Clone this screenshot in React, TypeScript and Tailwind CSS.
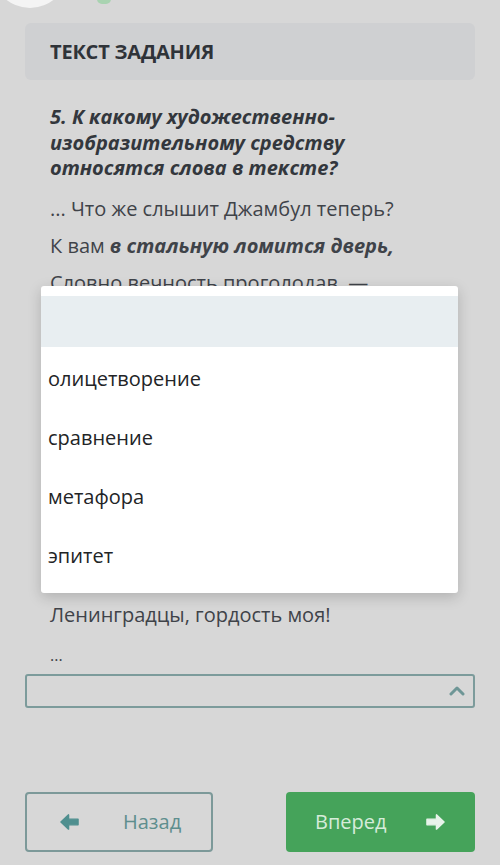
import React from "react";

const options = ["олицетворение", "сравнение", "метафора", "эпитет"];

const ArrowLeft = ({ className }: { className?: string }) => (
  <svg viewBox="0 0 20 18" className={className} fill="currentColor" stroke="currentColor" strokeWidth="1.5" strokeLinejoin="round">
    <path d="M1 9 L9 1.5 L9 6 L19 6 L19 12 L9 12 L9 16.5 Z" />
  </svg>
);

const ArrowRight = ({ className }: { className?: string }) => (
  <svg viewBox="0 0 20 18" className={className} fill="currentColor" stroke="currentColor" strokeWidth="1.5" strokeLinejoin="round">
    <path d="M19 9 L11 1.5 L11 6 L1 6 L1 12 L11 12 L11 16.5 Z" />
  </svg>
);

export default function App() {
  return (
    <div
      className="relative w-[500px] h-[865px] overflow-hidden bg-[#d7d7d7]"
      style={{ fontFamily: '"Open Sans", "Noto Sans", sans-serif' }}
    >
      {/* top of the page, scrolled away */}
      <div className="flex h-[8px] items-end overflow-hidden">
        <div className="ml-[-8px] h-[76px] w-[76px] shrink-0 rounded-full bg-[#f4f4f4]" />
        <div className="ml-[29px] mb-[4px] h-[10px] w-[14px] shrink-0 rounded-full bg-[#a9d3b1]" />
      </div>

      <div className="mx-[25px] mt-[15px] flex h-[57px] items-center rounded-[6px] bg-[#cfd0d2] px-[25px]">
        <h1 className="text-[20px] font-bold tracking-[-0.2px] text-[#2f3339]">ТЕКСТ ЗАДАНИЯ</h1>
      </div>

      <div className="px-[50px] pt-[24px]">
        <p className="text-[20px] font-bold italic leading-[25.5px] text-[#33373d]">
          5. К какому художественно-изобразительному средству относятся слова в тексте?
        </p>
        <div className="mt-[14px] text-[20px] leading-[27px] text-[#3f4349]">
          <p className="mb-[10px]">... Что же слышит Джамбул теперь?</p>
          <p className="mb-[10px]">
            К вам <b className="italic">в стальную ломится дверь,</b>
          </p>
          <p className="mb-[10px]">Словно вечность проголодав, —</p>
          {/* lines hidden under the open list */}
          <div className="h-[295px]" />
          <p className="mb-[14px]">Ленинградцы, гордость моя!</p>
          <p className="text-[16px]">...</p>
        </div>
      </div>

      <div className="mx-[25px] mt-[5px] flex h-[34px] items-center justify-end rounded-[3px] border-2 border-[#7c9b9b] pr-[8px]">
        <svg viewBox="0 0 16 10" className="h-[10px] w-[16px] text-[#6e9696]" fill="none" stroke="currentColor" strokeWidth="3" strokeLinecap="round" strokeLinejoin="round">
          <path d="M2 8 L8 2 L14 8" />
        </svg>
      </div>

      <div className="mx-[25px] mt-[84px] flex justify-between">
        <button className="flex h-[60px] w-[188px] items-center rounded-[4px] border-2 border-[#7c9999] pl-[33px]">
          <ArrowLeft className="h-[18px] w-[19px] text-[#4f8f8f]" />
          <span className="ml-[44px] text-[20px] text-[#5e8e8e]">Назад</span>
        </button>
        <button className="flex h-[60px] w-[189px] items-center rounded-[4px] bg-[#45a35a] pl-[29px]">
          <span className="text-[20px] text-[#d6ecda]">Вперед</span>
          <ArrowRight className="ml-[39px] h-[18px] w-[19px] text-[#e8f3ea]" />
        </button>
      </div>

      {/* open dropdown list */}
      <div className="absolute left-[41px] top-[286px] w-[417px] rounded-[3px] bg-white pt-[10px] pb-[10px] shadow-[0_4px_14px_rgba(0,0,0,0.18)]">
        <div className="h-[51px] bg-[#e8eef1]" />
        {options.map((o) => (
          <div key={o} className="flex h-[59px] items-center px-[7px] pt-[4px] text-[20px] text-[#222426]">
            {o}
          </div>
        ))}
      </div>
    </div>
  );
}
